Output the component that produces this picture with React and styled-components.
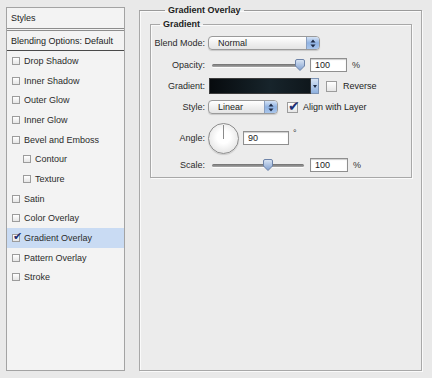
import React from 'react'
import styled, { createGlobalStyle } from 'styled-components'

const GlobalStyle = createGlobalStyle`
  html, body {
    margin: 0;
    padding: 0;
    background: #e9e9e9;
  }
  body {
    font-family: "Liberation Sans", Arial, sans-serif;
    font-size: 9px;
    color: #1c1c1c;
  }
`

const Page = styled.div`
  display: flex;
  width: 432px;
  height: 378px;
  overflow: hidden;
`

const Sidebar = styled.div`
  width: 117px;
  height: 362px;
  margin: 7px 0 0 6px;
  border: 1px solid #a3a3a3;
  background: #f3f3f3;
  display: flex;
  flex-direction: column;
`

const SideHeader = styled.div`
  height: 20px;
  display: flex;
  align-items: center;
  padding-left: 4px;
  border-bottom: 3px double #8c8c8c;
`

const BlendRow = styled.div`
  height: 19px;
  display: flex;
  align-items: center;
  padding-left: 4px;
  border-bottom: 1px solid #4a4a4a;
`

const StyleRow = styled.div`
  height: 19.7px;
  display: flex;
  align-items: center;
  gap: 4px;
  padding-left: ${p => (p.$indent ? 16 : 5)}px;
  color: #2b2b2b;
  background: ${p => (p.$active ? '#c9dbf3' : 'transparent')};
`

const Box = styled.span`
  box-sizing: border-box;
  width: ${p => p.$size}px;
  height: ${p => p.$size}px;
  border: 1px solid #9c9c9c;
  background: linear-gradient(#ffffff, #e6e6e6);
  display: inline-flex;
  align-items: center;
  justify-content: center;
  flex-shrink: 0;
  position: relative;
`

const Tick = styled.span`
  position: absolute;
  left: 0;
  top: ${p => p.$top}px;
  font-size: ${p => p.$fs}px;
  line-height: 1;
  color: #1d2f74;
  font-family: "DejaVu Sans", sans-serif;
  font-weight: bold;
`

const Check = ({ size = 8, checked }) => (
  <Box $size={size}>
    {checked && <Tick $fs={size + 3} $top={-4}>✔</Tick>}
  </Box>
)

const Outer = styled.fieldset`
  box-sizing: border-box;
  width: 282px;
  height: 367px;
  margin: 4px 0 0 14px;
  padding: 2px 9px 0 10px;
  border: 1px solid #a8a8a8;
  border-top-color: #9a9a9a;
  box-shadow: 1px 1px 0 #fafafa, inset 1px 1px 0 #fafafa;
  background: #ececec;
`

const Legend = styled.legend`
  font-weight: bold;
  line-height: 12px;
  padding: 0 3px;
  margin-left: ${p => p.$offset}px;
  color: #222;
`

const Inner = styled.fieldset`
  box-sizing: border-box;
  width: 262px;
  height: 160px;
  margin: 0;
  padding: 2px 0 0 0;
  border: 1px solid #a8a8a8;
  box-shadow: 1px 1px 0 #fafafa, inset 1px 1px 0 #fafafa;
`

const Form = styled.div`
  display: grid;
  grid-template-columns: 54px auto;
  grid-template-rows: 22px 22px 20px 22px 40px 14px;
  column-gap: 3px;
  align-items: center;
`

const Label = styled.div`
  text-align: right;
  white-space: nowrap;
  color: #2a2a2a;
`

const Controls = styled.div`
  display: flex;
  align-items: center;
`

const PopUp = styled.div`
  box-sizing: border-box;
  width: ${p => p.$width}px;
  height: 14px;
  border: 1px solid #9a9a9a;
  border-radius: 4px;
  background: linear-gradient(#ffffff, #f0f0f0 50%, #e4e4e4);
  display: flex;
  align-items: center;
  overflow: hidden;
  box-shadow: 0 1px 1px rgba(0, 0, 0, 0.15);
`

const PopText = styled.span`
  flex: 1;
  padding-left: 9px;
`

const Stepper = styled.span`
  width: 12px;
  height: 100%;
  background: linear-gradient(#d5e3f5, #8fb2e2 50%, #a9c6ec);
  border-left: 1px solid #8a9fbf;
  display: flex;
  align-items: center;
  justify-content: center;
`

const Arrows = () => (
  <svg width="6" height="9" viewBox="0 0 6 9">
    <path d="M3 0.5 L5.5 3.5 H0.5 Z M3 8.5 L5.5 5.5 H0.5 Z" fill="#1e2b44" />
  </svg>
)

const SliderTrack = styled.div`
  position: relative;
  width: ${p => p.$width}px;
  height: 3px;
  margin: 0 6px 0 4px;
  border-radius: 2px;
  background: linear-gradient(#6f6f6f, #a8a8a8);
  box-shadow: 0 1px 0 #fbfbfb;
`

const Thumb = styled.svg`
  position: absolute;
  top: -5px;
  margin-left: -5px;
`

const Slider = ({ width, value }) => (
  <SliderTrack $width={width}>
    <Thumb width="10" height="12" viewBox="0 0 10 12" style={{ left: `${value}%` }}>
      <defs>
        <linearGradient id="tg" x1="0" x2="0" y1="0" y2="1">
          <stop offset="0" stopColor="#dbe6f5" />
          <stop offset="1" stopColor="#7f9fcf" />
        </linearGradient>
      </defs>
      <path d="M2 0.5 H8 Q9.5 0.5 9.5 2 V7 L5 11.5 L0.5 7 V2 Q0.5 0.5 2 0.5 Z" fill="url(#tg)" stroke="#6d83a8" />
    </Thumb>
  </SliderTrack>
)

const Field = styled.div`
  box-sizing: border-box;
  width: ${p => p.$width}px;
  height: 14px;
  border: 1px solid #8f8f8f;
  background: #fff;
  box-shadow: inset 0 1px 1px rgba(0, 0, 0, 0.2);
  padding-left: 4px;
  display: flex;
  align-items: center;
`

const Unit = styled.span`
  margin-left: ${p => p.$gap}px;
  margin-bottom: ${p => (p.$raised ? 10 : 0)}px;
  color: #333;
`

const Swatch = styled.div`
  box-sizing: border-box;
  width: 102px;
  height: 16px;
  margin-left: 1px;
  border: 1px solid #3c3c3c;
  background: linear-gradient(90deg, #070b0e, #17242b 60%, #0f171c);
`

const SwatchButton = styled.div`
  box-sizing: border-box;
  width: 8px;
  height: 16px;
  background: linear-gradient(#d6e3f4, #8fb1df);
  border: 1px solid #7d93b4;
  border-left: none;
  display: flex;
  align-items: center;
  justify-content: center;
  margin-right: 7px;
`

const CheckLabel = styled.span`
  margin-left: ${p => p.$gap}px;
`

const Spacer = styled.span`
  width: ${p => p.$w}px;
`

const Dial = styled.div`
  box-sizing: border-box;
  width: 31px;
  height: 31px;
  border-radius: 50%;
  border: 1px solid #8d8d8d;
  background: radial-gradient(circle at 50% 45%, #ffffff 30%, #e6e6e6 75%, #cfcfcf);
  box-shadow: 0 1px 1px rgba(0, 0, 0, 0.15);
  display: flex;
  justify-content: center;
  margin-right: 4px;
`

const Needle = styled.span`
  width: 1px;
  height: 14px;
  margin-top: 1px;
  background: #8a8a8a;
`

const items = [
  { label: 'Drop Shadow' },
  { label: 'Inner Shadow' },
  { label: 'Outer Glow' },
  { label: 'Inner Glow' },
  { label: 'Bevel and Emboss' },
  { label: 'Contour', indent: true },
  { label: 'Texture', indent: true },
  { label: 'Satin' },
  { label: 'Color Overlay' },
  { label: 'Gradient Overlay', checked: true },
  { label: 'Pattern Overlay' },
  { label: 'Stroke' },
]

export default function App() {
  return (
    <Page>
      <GlobalStyle />
      <Sidebar>
        <SideHeader>Styles</SideHeader>
        <BlendRow>Blending Options: Default</BlendRow>
        {items.map(it => (
          <StyleRow key={it.label} $indent={it.indent} $active={it.checked}>
            <Check checked={it.checked} />
            {it.label}
          </StyleRow>
        ))}
      </Sidebar>

      <Outer>
        <Legend $offset={15}>Gradient Overlay</Legend>
        <Inner>
          <Legend $offset={9}>Gradient</Legend>
          <Form>
            <Label>Blend Mode:</Label>
            <Controls>
              <PopUp $width={112}>
                <PopText>Normal</PopText>
                <Stepper><Arrows /></Stepper>
              </PopUp>
            </Controls>

            <Label>Opacity:</Label>
            <Controls>
              <Slider width={92} value={96} />
              <Field $width={37}>100</Field>
              <Unit $gap={5}>%</Unit>
            </Controls>

            <Label>Gradient:</Label>
            <Controls>
              <Swatch />
              <SwatchButton>
                <svg width="4" height="3" viewBox="0 0 4 3">
                  <path d="M0 0 H4 L2 3 Z" fill="#1e2b44" />
                </svg>
              </SwatchButton>
              <Check size={11} />
              <CheckLabel $gap={6}>Reverse</CheckLabel>
            </Controls>

            <Label>Style:</Label>
            <Controls>
              <PopUp $width={70}>
                <PopText>Linear</PopText>
                <Stepper><Arrows /></Stepper>
              </PopUp>
              <Spacer $w={9} />
              <Check size={11} checked />
              <CheckLabel $gap={5}>Align with Layer</CheckLabel>
            </Controls>

            <Label>Angle:</Label>
            <Controls>
              <Dial><Needle /></Dial>
              <Field $width={46}>90</Field>
              <Unit $gap={4} $raised>°</Unit>
            </Controls>

            <Label>Scale:</Label>
            <Controls>
              <Slider width={92} value={61} />
              <Field $width={38}>100</Field>
              <Unit $gap={5}>%</Unit>
            </Controls>
          </Form>
        </Inner>
      </Outer>
    </Page>
  )
}
